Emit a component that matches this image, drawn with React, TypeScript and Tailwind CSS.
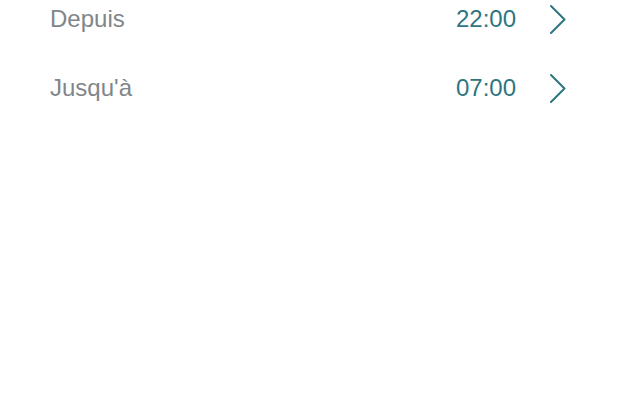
import React from "react";

function Chevron() {
  return (
    <svg width="18" height="30" viewBox="0 0 18 30" fill="none" className="shrink-0">
      <polyline points="2,2 15.5,15.5 2,29" stroke="#2e7580" strokeWidth="2" strokeLinecap="round" strokeLinejoin="round" />
    </svg>
  );
}

function Row({ label, value }: { label: string; value: string }) {
  return (
    <div className="flex h-[69px] items-center pl-[50px] pr-[53px]">
      <span className="flex-1 text-[24px] leading-[27px] text-[#80868a]">{label}</span>
      <span className="text-[24px] leading-[27px] text-[#2e7580]">{value}</span>
      <div className="ml-[33px] flex items-center">
        <Chevron />
      </div>
    </div>
  );
}

export default function App() {
  return (
    <div className="h-[410px] w-[620px] overflow-hidden bg-white" style={{ fontFamily: '"Liberation Sans", Arial, sans-serif' }}>
      <div className="-mt-[16px]">
        <Row label="Depuis" value="22:00" />
        <Row label="Jusqu'à" value="07:00" />
      </div>
    </div>
  );
}
